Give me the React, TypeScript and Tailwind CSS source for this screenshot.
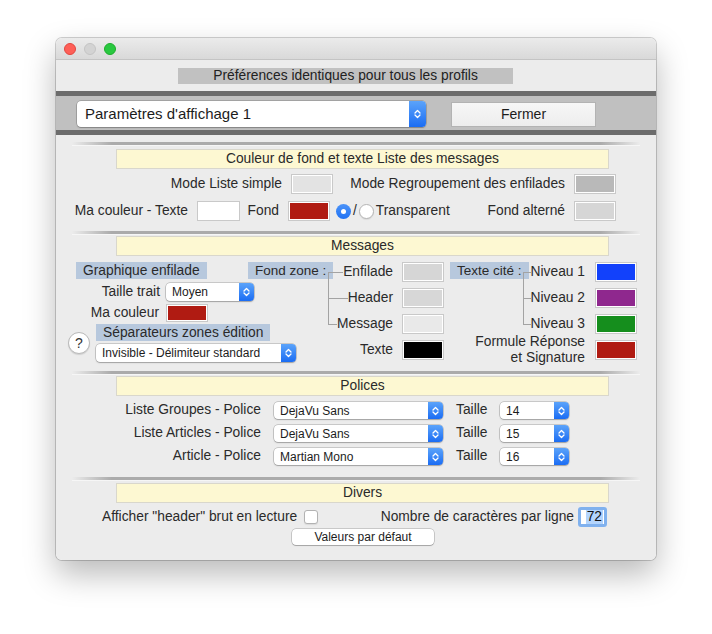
import type { ReactNode } from "react";

function Chevrons() {
  return (
    <svg width="7" height="10" viewBox="0 0 7 10" fill="none">
      <path d="M1 4L3.5 1.5L6 4M1 6L3.5 8.5L6 6" stroke="white" strokeWidth="1.3" strokeLinecap="round" strokeLinejoin="round" />
    </svg>
  );
}

function Popup({ label, className, textClass, arrowClass }: { label: string; className: string; textClass: string; arrowClass: string }) {
  return (
    <div className={`flex shrink-0 rounded-[4px] bg-white shadow-[0_0_0_0.5px_rgba(0,0,0,0.3),0_1px_1.5px_rgba(0,0,0,0.2)] ${className}`}>
      <span className={`flex-1 flex items-center whitespace-nowrap text-[#1c1c1c] ${textClass}`}>{label}</span>
      <span className={`flex items-center justify-center rounded-r-[4px] bg-gradient-to-b from-[#5ba3fa] to-[#1a6cf3] ${arrowClass}`}>
        <Chevrons />
      </span>
    </div>
  );
}

function Swatch({ color, className }: { color: string; className: string }) {
  return (
    <div className={`shrink-0 border border-[#c9c9c9] bg-white p-px ${className}`}>
      <div className={`h-full w-full ${color}`} />
    </div>
  );
}

function Chip({ children, className = "" }: { children: ReactNode; className?: string }) {
  return <div className={`h-[17px] w-fit whitespace-nowrap bg-[#b7c8dd] px-[7px] leading-[17px] ${className}`}>{children}</div>;
}

function Header({ children, className = "" }: { children: ReactNode; className?: string }) {
  return (
    <div className={`ml-[60px] h-[20px] w-[493px] border border-[#d9d7cc] bg-[#fdf8d2] text-center leading-[18px] ${className}`}>
      {children}
    </div>
  );
}

function Groove({ className }: { className: string }) {
  return (
    <div className={`mx-[16px] h-[3px] bg-[linear-gradient(to_right,transparent,#ababab_7%,#ababab_93%,transparent)] shadow-[0_1px_0_#f6f6f6] ${className}`} />
  );
}

// tree branch between a group label and its rows
function Branch({ pos }: { pos: "first" | "mid" | "last" | "none" }) {
  if (pos === "none") return <div className="flex-1" />;
  return (
    <div className="flex flex-1 flex-col self-stretch">
      <div className={`flex-1 border-b border-[#a3a3a3] ${pos === "first" ? "" : "border-l"}`} />
      <div className={`flex-1 border-[#a3a3a3] ${pos === "last" ? "" : "border-l"}`} />
    </div>
  );
}

function Radio({ on }: { on: boolean }) {
  return on ? (
    <div className="flex h-[15px] w-[15px] shrink-0 items-center justify-center rounded-full bg-gradient-to-b from-[#4b93f8] to-[#1f72f4]">
      <div className="h-[5px] w-[5px] rounded-full bg-white" />
    </div>
  ) : (
    <div className="h-[15px] w-[15px] shrink-0 rounded-full border border-[#b4b4b4] bg-white shadow-[0_1px_1px_rgba(0,0,0,0.08)]" />
  );
}

const zoneRows = [
  { label: "Enfilade", color: "bg-[#d6d6d6]" },
  { label: "Header", color: "bg-[#d7d7d7]" },
  { label: "Message", color: "bg-[#e9e9e9]" },
];

const quoteRows = [
  { label: "Niveau 1", color: "bg-[#1241fb]" },
  { label: "Niveau 2", color: "bg-[#8f288e]" },
  { label: "Niveau 3", color: "bg-[#158e1d]" },
];

const fontRows = [
  { label: "Liste Groupes - Police", font: "DejaVu Sans", size: "14" },
  { label: "Liste Articles - Police", font: "DejaVu Sans", size: "15" },
  { label: "Article - Police", font: "Martian Mono", size: "16" },
];

const branchPos = ["first", "mid", "last"] as const;

export default function App() {
  return (
    <div className="h-[634px] w-[712px] bg-white pl-[56px] pt-[38px] font-['Liberation_Sans',Arial,sans-serif] text-[13.8px] text-[#2a2a2a]">
      <div className="flex h-[522px] w-[600px] flex-col overflow-hidden rounded-[6px] shadow-[0_0_0_1px_rgba(0,0,0,0.18),0_14px_32px_rgba(0,0,0,0.28)]">
        {/* title bar */}
        <div className="flex h-[22px] shrink-0 items-center gap-[8px] border-b border-[#c4c4c4] bg-gradient-to-b from-[#ebebeb] to-[#d9d9d9] pl-[8px]">
          <div className="h-[12px] w-[12px] rounded-full border border-[#e1463f] bg-[#fe5f57]" />
          <div className="h-[12px] w-[12px] rounded-full border border-[#c4c4c4] bg-[#d3d3d3]" />
          <div className="h-[12px] w-[12px] rounded-full border border-[#1dad2b] bg-[#29c840]" />
        </div>

        <div className="flex-1 bg-[#ececec]">
          <div className="ml-[122px] mt-[8px] h-[16px] w-[335px] bg-[#c1c1c1] text-center leading-[16px] text-[#222]">
            Préférences identiques pour tous les profils
          </div>

          {/* profile selector band */}
          <div className="mt-[7px] h-[5px] bg-[#6c6c6c]" />
          <div className="flex h-[34px] items-start bg-[#c0c0c0] pl-[21px] pt-[5px]">
            <Popup label="Paramètres d'affichage 1" className="h-[26px] w-[349px]" textClass="pl-[8px] text-[15px]" arrowClass="w-[17px]" />
            <button className="ml-[25px] mt-px h-[25px] w-[145px] border border-[#b3b3b3] bg-gradient-to-b from-[#f7f7f7] to-[#ededed] text-[14px] text-[#1c1c1c]">
              Fermer
            </button>
          </div>
          <div className="h-[5px] bg-[#6c6c6c]" />

          {/* list colours */}
          <Groove className="mt-[7px]" />
          <Header className="mt-[4px]">Couleur de fond et texte Liste des messages</Header>
          <div className="mt-[5px] flex h-[20px] items-center">
            <span className="w-[226px] shrink-0 text-right">Mode Liste simple</span>
            <Swatch color="bg-[#e3e3e3]" className="ml-[9px] h-[20px] w-[42px]" />
            <span className="w-[232px] shrink-0 text-right">Mode Regroupement des enfilades</span>
            <Swatch color="bg-[#b9b9b9]" className="ml-[9px] h-[20px] w-[42px]" />
          </div>
          <div className="mt-[7px] flex h-[20px] w-[560px] items-center">
            <span className="w-[132px] shrink-0 text-right whitespace-nowrap">Ma couleur - Texte</span>
            <Swatch color="bg-white" className="ml-[9px] h-[20px] w-[43px]" />
            <span className="w-[39px] shrink-0 text-right">Fond</span>
            <Swatch color="bg-[#b01b12]" className="ml-[9px] h-[20px] w-[42px]" />
            <div className="ml-[6px]">
              <Radio on />
            </div>
            <span className="mx-[2px]">/</span>
            <Radio on={false} />
            <span className="ml-[2px]">Transparent</span>
            <span className="flex-1 text-right">Fond alterné</span>
            <Swatch color="bg-[#d6d6d6]" className="ml-[9px] h-[20px] w-[42px]" />
          </div>

          {/* messages */}
          <Groove className="mt-[10px]" />
          <Header className="mt-[2px]">Messages</Header>
          <div className="mt-[3px] flex h-[104px] items-start">
            <div className="ml-[12px] flex w-[180px] shrink-0 flex-col">
              <Chip className="ml-[8px] mt-[3px]">Graphique enfilade</Chip>
              <div className="mt-[4px] flex h-[18px] items-center">
                <span className="w-[92px] shrink-0 text-right">Taille trait</span>
                <Popup label="Moyen" className="ml-[6px] h-[18px] w-[88px]" textClass="pl-[6px] text-[12px]" arrowClass="w-[15px]" />
              </div>
              <div className="mt-[3px] flex h-[18px] items-center">
                <span className="w-[91px] shrink-0 text-right">Ma couleur</span>
                <Swatch color="bg-[#b01b12]" className="ml-[7px] h-[18px] w-[42px]" />
              </div>
              <div className="mt-[2px] flex items-center">
                <button className="flex h-[22px] w-[22px] shrink-0 items-center justify-center rounded-full border border-[#b9b9b9] bg-white text-[14px] text-[#333] shadow-[0_1px_1px_rgba(0,0,0,0.12)]">
                  ?
                </button>
                <div className="ml-[6px] flex shrink-0 flex-col">
                  <Chip>Séparateurs zones édition</Chip>
                  <Popup label="Invisible - Délimiteur standard" className="mt-[3px] h-[18px] w-[200px]" textClass="pl-[6px] text-[12px]" arrowClass="w-[15px]" />
                </div>
              </div>
            </div>

            <div className="flex w-[196px] shrink-0 flex-col">
              {zoneRows.map((r, i) => (
                <div key={r.label} className="flex h-[26px] items-center">
                  <div className="flex w-[80px] shrink-0 self-stretch items-start pt-[3px]">
                    {i === 0 && <Chip className="w-[80px] px-[5px] text-[13.5px]">Fond zone :</Chip>}
                  </div>
                  <Branch pos={branchPos[i]} />
                  <span className="whitespace-nowrap">{r.label}</span>
                  <Swatch color={r.color} className="ml-[9px] h-[20px] w-[42px]" />
                </div>
              ))}
              <div className="flex h-[26px] items-center">
                <Branch pos="none" />
                <span>Texte</span>
                <Swatch color="bg-black" className="ml-[9px] h-[20px] w-[42px]" />
              </div>
            </div>

            <div className="ml-[6px] flex w-[187px] shrink-0 flex-col">
              {quoteRows.map((r, i) => (
                <div key={r.label} className="flex h-[26px] items-center">
                  <div className="flex w-[73px] shrink-0 self-stretch items-start pt-[3px]">
                    {i === 0 && <Chip className="w-[72px] px-[4px] text-[13.5px]">Texte cité :</Chip>}
                  </div>
                  <Branch pos={branchPos[i]} />
                  <span className="whitespace-nowrap">{r.label}</span>
                  <Swatch color={r.color} className="ml-[10px] h-[20px] w-[42px]" />
                </div>
              ))}
              <div className="flex h-[26px] items-center">
                <span className="flex-1 whitespace-nowrap text-right leading-[16px]">
                  Formule Réponse
                  <br />
                  et Signature
                </span>
                <Swatch color="bg-[#b01b12]" className="ml-[10px] h-[20px] w-[42px]" />
              </div>
            </div>
          </div>

          {/* fonts */}
          <Groove className="mt-[8px]" />
          <Header className="mt-[2px]">Polices</Header>
          {fontRows.map((r) => (
            <div key={r.label} className="mt-[6px] flex h-[17px] items-center">
              <span className="w-[205px] shrink-0 text-right">{r.label}</span>
              <Popup label={r.font} className="ml-[13px] h-[17px] w-[169px]" textClass="pl-[6px] text-[12px]" arrowClass="w-[15px]" />
              <span className="ml-[13px] w-[36px] shrink-0">Taille</span>
              <Popup label={r.size} className="ml-[8px] h-[17px] w-[69px]" textClass="pl-[6px] text-[12px]" arrowClass="w-[15px]" />
            </div>
          ))}

          {/* misc */}
          <Groove className="mt-[12px]" />
          <Header className="mt-[3px]">Divers</Header>
          <div className="mt-[4px] flex h-[20px] w-[551px] items-center">
            <span className="ml-[46px] whitespace-nowrap">Afficher "header" brut en lecture</span>
            <div className="ml-[7px] h-[14px] w-[14px] shrink-0 rounded-[3px] border border-[#b2b2b2] bg-white shadow-[0_1px_1px_rgba(0,0,0,0.08)]" />
            <span className="flex-1 whitespace-nowrap text-right">Nombre de caractères par ligne</span>
            <div className="ml-[4px] flex h-[20px] w-[29px] shrink-0 items-center justify-end rounded-[3px] border-[3px] border-[#80b1ee] bg-white pr-px">
              <span className="bg-[#b3d4fc] px-px leading-[14px] text-[#111]">72</span>
            </div>
          </div>
          <button className="ml-[236px] mt-[2px] h-[16px] w-[142px] rounded-[4px] bg-white text-[12px] leading-[14px] text-[#1c1c1c] shadow-[0_0_0_0.5px_rgba(0,0,0,0.3),0_1px_1px_rgba(0,0,0,0.18)]">
            Valeurs par défaut
          </button>
        </div>
      </div>
    </div>
  );
}
